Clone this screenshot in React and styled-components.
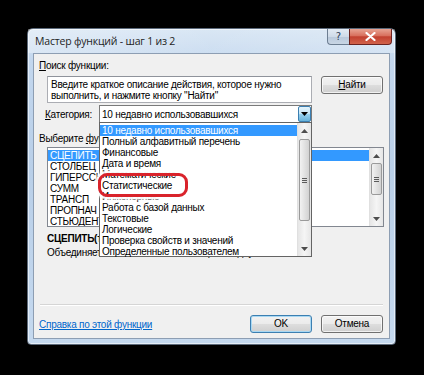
import React from 'react';
import styled, { createGlobalStyle } from 'styled-components';

const GlobalStyle = createGlobalStyle`
  html, body {
    margin: 0;
    padding: 0;
    background: #000;
  }
  body {
    width: 424px;
    height: 375px;
    overflow: hidden;
    font-family: "Liberation Sans", Arial, sans-serif;
    font-size: 10px;
    letter-spacing: -0.25px;
    color: #000;
  }
`;

const categories = [
  '10 недавно использовавшихся',
  'Полный алфавитный перечень',
  'Финансовые',
  'Дата и время',
  'Математические',
  'Статистические',
  'Инженерные',
  'Работа с базой данных',
  'Текстовые',
  'Логические',
  'Проверка свойств и значений',
  'Определенные пользователем',
];

const functions = ['СЦЕПИТЬ', 'СТОЛБЕЦ', 'ГИПЕРССЫЛКА', 'СУММ', 'ТРАНСП', 'ПРОПНАЧ', 'СТЬЮДЕНТ.ОБР'];

const Scrollbar = ({ thumbTop, thumbHeight }) => (
  <Track>
    <Arrow>
      <svg width="7" height="4" viewBox="0 0 7 4">
        <path d="M0 4 L3.5 0 L7 4 Z" fill="#4d4d4d" />
      </svg>
    </Arrow>
    <Rail>
      <Thumb $top={thumbTop} $height={thumbHeight}>
        <Grip />
      </Thumb>
    </Rail>
    <Arrow>
      <svg width="7" height="4" viewBox="0 0 7 4">
        <path d="M0 0 L7 0 L3.5 4 Z" fill="#4d4d4d" />
      </svg>
    </Arrow>
  </Track>
);

const App = () => {
  return (
    <>
      <GlobalStyle />
      <Screen>
        <Window>
          <TitleBar>
            <Title>Мастер функций - шаг 1 из 2</Title>
            <Caption>
              <HelpButton>?</HelpButton>
              <CloseButton>
                <svg width="11" height="9" viewBox="0 0 11 9">
                  <path d="M1.5 1 L9.5 8 M9.5 1 L1.5 8" stroke="#fff" strokeWidth="2.2" strokeLinecap="round" />
                </svg>
              </CloseButton>
            </Caption>
          </TitleBar>

          <Client>
            <Label $left={5}>
              <u>П</u>оиск функции:
            </Label>

            <SearchRow>
              <TextArea>
                Введите краткое описание действия, которое нужно
                <br />
                выполнить, и нажмите кнопку "Найти"
              </TextArea>
              <Button>
                <u>Н</u>айти
              </Button>
            </SearchRow>

            <CategoryRow>
              <CategoryLabel>
                <u>К</u>атегория:
              </CategoryLabel>
              <Combo>
                <ComboValue>10 недавно использовавшихся</ComboValue>
                <ComboButton>
                  <svg width="7" height="4" viewBox="0 0 7 4">
                    <path d="M0 0 L7 0 L3.5 4 Z" fill="#000" />
                  </svg>
                </ComboButton>
                <DropList>
                  <DropItems>
                    {categories.map((c, i) => (
                      <DropItem key={c} $selected={i === 0}>
                        {c}
                      </DropItem>
                    ))}
                    <Highlight />
                  </DropItems>
                  <Scrollbar thumbTop={1} thumbHeight={82} />
                </DropList>
              </Combo>
            </CategoryRow>

            <Label $left={5} $top={9}>
              Выберите <u>ф</u>ункцию:
            </Label>

            <FuncList>
              <FuncItems>
                {functions.map((f, i) => (
                  <FuncItem key={f} $selected={i === 0}>
                    {f}
                  </FuncItem>
                ))}
              </FuncItems>
              <Scrollbar thumbTop={0} thumbHeight={32} />
            </FuncList>

            <Signature>СЦЕПИТЬ(текст1;текст2;...)</Signature>
            <Description>Объединяет несколько текстовых строк в одну.</Description>

            <Separator />

            <BottomRow>
              <HelpLink>Справка по этой функции</HelpLink>
              <Buttons>
                <Button $default>OK</Button>
                <Button>Отмена</Button>
              </Buttons>
            </BottomRow>
          </Client>
        </Window>
      </Screen>
    </>
  );
};

export default App;

const Screen = styled.div`
  width: 424px;
  height: 375px;
  padding: 28px 0 0 27px;
  box-sizing: border-box;
  background: #000;
`;

const Window = styled.div`
  width: 369px;
  height: 317px;
  box-sizing: border-box;
  padding: 0 5px 5px 5px;
  border: 1px solid #5c6a7b;
  border-radius: 6px 6px 4px 4px;
  background: linear-gradient(180deg, #d5e4f3 0%, #c3d7ee 10%, #b9cfe8 45%, #c5d9ef 100%);
  box-shadow: inset 0 0 0 1px rgba(255, 255, 255, 0.55);
  display: flex;
  flex-direction: column;
`;

const TitleBar = styled.div`
  height: 24px;
  display: flex;
  align-items: flex-start;
  justify-content: space-between;
  background: linear-gradient(90deg, rgba(255, 255, 255, 0.35), rgba(255, 255, 255, 0.1) 50%, rgba(255, 255, 255, 0.25));
  margin: 0 -5px;
  padding: 0 3px 0 7px;
`;

const Title = styled.div`
  font-family: "Open Sans", "Noto Sans", sans-serif;
  font-size: 10.5px;
  letter-spacing: -0.2px;
  color: #1e1e1e;
  line-height: 24px;
`;

const Caption = styled.div`
  display: flex;
  height: 16px;
`;

const CaptionButton = styled.div`
  height: 16px;
  box-sizing: border-box;
  border: 1px solid #6d7e92;
  border-top: none;
  display: flex;
  align-items: center;
  justify-content: center;
`;

const HelpButton = styled(CaptionButton)`
  width: 22px;
  border-radius: 0 0 0 4px;
  border-right: none;
  background: linear-gradient(180deg, #e3ebf4 0%, #cfdbe8 50%, #b9c9db 52%, #c9d6e5 100%);
  font-family: "DejaVu Sans", sans-serif;
  font-size: 10px;
  letter-spacing: 0;
  color: #2c3e55;
`;

const CloseButton = styled(CaptionButton)`
  width: 43px;
  border-radius: 0 0 4px 0;
  border-color: #6b2320;
  background: linear-gradient(180deg, #e8a493 0%, #d8705d 45%, #c2412f 52%, #d1624b 100%);
`;

const Client = styled.div`
  flex: 1;
  box-sizing: border-box;
  border: 1px solid #8d9eb3;
  background: #f0f0f0;
  display: flex;
  flex-direction: column;
`;

const Label = styled.div`
  margin-left: ${(p) => p.$left}px;
  margin-top: ${(p) => p.$top ?? 5}px;
  height: 13px;
  line-height: 13px;
`;

const SearchRow = styled.div`
  display: flex;
  align-items: flex-start;
  gap: 9px;
  margin: 4px 0 0 13px;
`;

const TextArea = styled.div`
  width: 265px;
  height: 27px;
  box-sizing: border-box;
  border: 1px solid #abadb3;
  border-top-color: #8f939b;
  background: #fff;
  padding: 2px 3px;
  line-height: 11px;
  white-space: nowrap;
`;

const Button = styled.div`
  width: 62px;
  height: 18px;
  box-sizing: border-box;
  border: 1px solid ${(p) => (p.$default ? '#3c7fb1' : '#707070')};
  border-radius: 3px;
  background: linear-gradient(180deg, #f2f2f2 0%, #ebebeb 48%, #dddddd 52%, #cfcfcf 100%);
  box-shadow: inset 0 0 0 1px ${(p) => (p.$default ? '#a8d8f3' : 'rgba(255,255,255,0.7)')};
  display: flex;
  align-items: center;
  justify-content: center;
  line-height: 16px;
`;

const CategoryRow = styled.div`
  display: flex;
  align-items: center;
  margin: 2px 0 0 11px;
  height: 18px;
  position: relative;
  z-index: 2;
`;

const CategoryLabel = styled.div`
  width: 54px;
`;

const Combo = styled.div`
  position: relative;
  width: 213px;
  height: 18px;
  box-sizing: border-box;
  border: 1px solid #7a7a7a;
  background: #fff;
  display: flex;
  align-items: center;
`;

const ComboValue = styled.div`
  flex: 1;
  padding-left: 2px;
  white-space: nowrap;
`;

const ComboButton = styled.div`
  width: 13px;
  height: 16px;
  box-sizing: border-box;
  border: 1px solid #3c7fb1;
  border-radius: 2px;
  background: linear-gradient(180deg, #e5f4fc 0%, #c4e5f6 50%, #98d1ef 52%, #68b3db 100%);
  display: flex;
  align-items: center;
  justify-content: center;
`;

const DropList = styled.div`
  position: absolute;
  top: 100%;
  left: -1px;
  width: 213px;
  height: 135px;
  box-sizing: border-box;
  border: 1px solid #646464;
  background: #fff;
  display: flex;
`;

const DropItems = styled.div`
  position: relative;
  flex: 1;
  padding-top: 2px;
`;

const DropItem = styled.div`
  height: 11px;
  line-height: 11px;
  padding-left: 2px;
  white-space: nowrap;
  overflow: hidden;
  background: ${(p) => (p.$selected ? '#3399ff' : 'transparent')};
  color: ${(p) => (p.$selected ? '#fff' : '#000')};
`;

const Highlight = styled.div`
  position: absolute;
  left: -2px;
  top: 50px;
  width: 90px;
  height: 24px;
  box-sizing: border-box;
  border: 3px solid #d9232b;
  border-radius: 9px;
  box-shadow: 0 0 0 2px rgba(255, 255, 255, 0.85), 0 0 2px 3px rgba(255, 255, 255, 0.6);
`;

const Track = styled.div`
  width: 13px;
  display: flex;
  flex-direction: column;
  background: linear-gradient(90deg, #e6e6e6, #f5f5f5 50%, #e6e6e6);
  border-left: 1px solid #e0e0e0;
`;

const Arrow = styled.div`
  height: 15px;
  display: flex;
  align-items: center;
  justify-content: center;
`;

const Rail = styled.div`
  flex: 1;
  display: flex;
  flex-direction: column;
`;

const Thumb = styled.div`
  margin: ${(p) => p.$top}px 1px 0;
  height: ${(p) => p.$height}px;
  box-sizing: border-box;
  border: 1px solid #9a9a9a;
  border-radius: 2px;
  background: linear-gradient(90deg, #f2f2f2, #e2e2e2 50%, #d2d2d2);
  display: flex;
  align-items: center;
  justify-content: center;
`;

const Grip = styled.div`
  width: 5px;
  height: 5px;
  background: repeating-linear-gradient(180deg, #5a5a5a 0 1px, transparent 1px 2px);
`;

const FuncList = styled.div`
  margin: 2px 0 0 13px;
  width: 337px;
  height: 80px;
  box-sizing: border-box;
  border: 1px solid #828790;
  background: #fff;
  display: flex;
`;

const FuncItems = styled.div`
  flex: 1;
  padding-top: 2px;
  overflow: hidden;
`;

const FuncItem = styled.div`
  height: 11px;
  line-height: 11px;
  padding-left: 2px;
  background: ${(p) => (p.$selected ? '#3399ff' : 'transparent')};
  color: ${(p) => (p.$selected ? '#fff' : '#000')};
`;

const Signature = styled.div`
  margin: 5px 0 0 13px;
  font-weight: bold;
  line-height: 13px;
  white-space: nowrap;
`;

const Description = styled.div`
  margin: 1px 0 0 13px;
  line-height: 13px;
  white-space: nowrap;
`;

const Separator = styled.div`
  margin: 45px 0 0 6px;
  width: 343px;
  height: 1px;
  background: #d5d5d5;
  border-bottom: 1px solid #fff;
`;

const BottomRow = styled.div`
  display: flex;
  align-items: center;
  justify-content: space-between;
  margin: 9px 0 0 5px;
  padding-right: 6px;
`;

const HelpLink = styled.div`
  color: #0066cc;
  text-decoration: underline;
`;

const Buttons = styled.div`
  display: flex;
  gap: 9px;
`;
